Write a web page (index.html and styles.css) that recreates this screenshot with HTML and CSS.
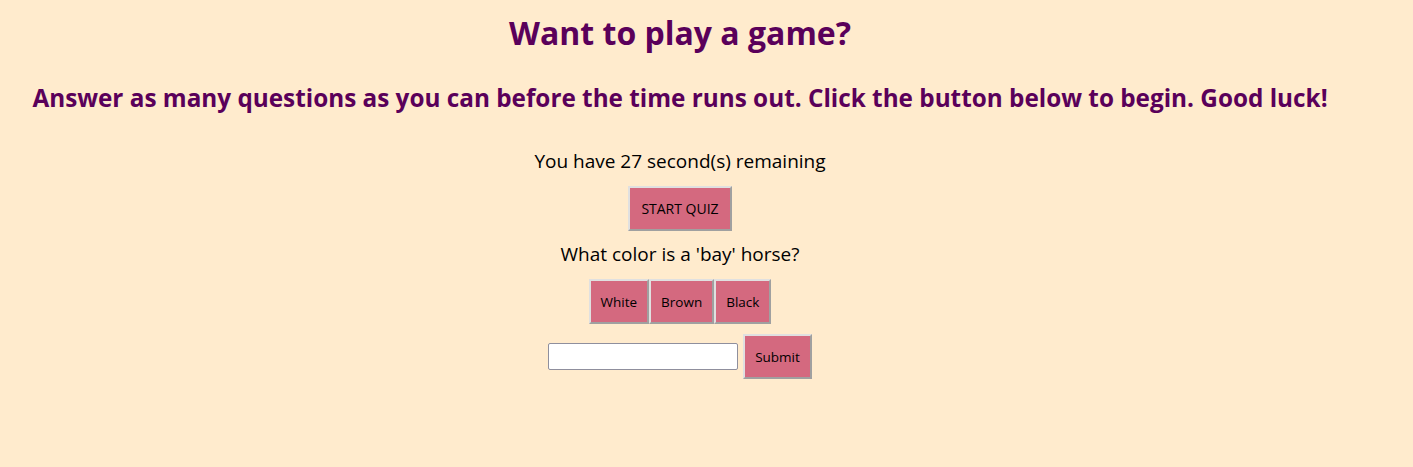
FILE: index.html
```html
<!DOCTYPE html>
<html>
<head>
<meta charset="utf-8">
<link rel="stylesheet" href="styles.css">
</head>
<body>
<main class="page">
  <h1 class="title">Want to play a game?</h1>
  <h2 class="intro">Answer as many questions as you can before the time runs out. Click the button below to begin. Good luck!</h2>
  <p class="timer">You have 27 second(s) remaining</p>
  <div class="row start-row"><button class="btn start" type="button">START QUIZ</button></div>
  <p class="question">What color is a 'bay' horse?</p>
  <div class="row answers"><button class="btn answer" type="button">White</button><button class="btn answer" type="button">Brown</button><button class="btn answer" type="button">Black</button></div>
  <form class="row submit-row">
    <input class="name" type="text">
    <button class="btn submit" type="button">Submit</button>
  </form>
</main>
</body>
</html>
```
FILE: styles.css
```css
html, body { margin: 0; padding: 0; }
body {
  background: #ffebcd;
  font-family: "Open Sans", sans-serif;
  color: #000;
  height: 467px;
}
.page {
  width: 1360px;
  display: flex;
  flex-direction: column;
  align-items: center;
  text-align: center;
}
.title {
  color: #5a005a;
  font-size: 32px;
  line-height: 40px;
  font-weight: bold;
  margin: 13px 0 0;
}
.intro {
  color: #5a005a;
  font-size: 24.3px;
  line-height: 32px;
  font-weight: bold;
  margin: 29px 0 0;
  white-space: nowrap;
}
.timer {
  font-size: 19px;
  line-height: 24px;
  margin: 35px 0 0;
}
.row { display: flex; justify-content: center; align-items: center; }
.btn {
  background: #d4697f;
  border: 2px solid;
  border-color: #e0e0e0 #a0a0a0 #a0a0a0 #e0e0e0;
  font-family: "Open Sans", sans-serif;
  font-size: 13.5px;
  color: #000;
  height: 45px;
  padding: 0 10px;
  margin: 0;
  cursor: pointer;
}
.start-row { margin-top: 13px; }
.start { font-size: 14px; padding: 0 11px; }
.question {
  font-size: 19px;
  line-height: 24px;
  margin: 11px 0 0;
}
.answers { margin-top: 13px; }
.submit-row { margin-top: 10px; gap: 5px; }
.name {
  width: 190px;
  height: 27px;
  box-sizing: border-box;
  border: 1px solid #8f8f9d;
  border-radius: 2px;
  background: #fff;
  padding: 0 4px;
  margin: 0;
}
.submit { width: 69px; padding: 0; }
```
